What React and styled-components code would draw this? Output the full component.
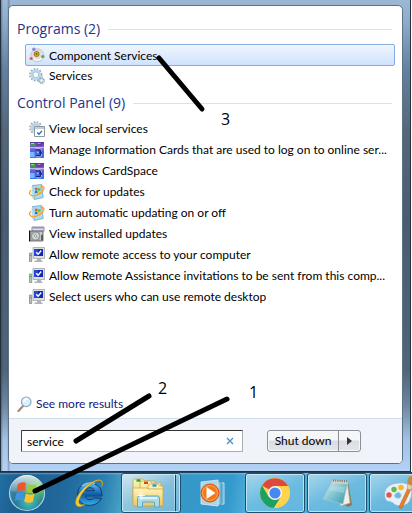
import React from "react";
import styled, { createGlobalStyle, css } from "styled-components";

const GlobalStyle = createGlobalStyle`
  * { box-sizing: border-box; }
  body { margin: 0; background: #fff; font-family: Lato, "Noto Sans", sans-serif; font-size: 12px; color: #000; }
  button, input { font: inherit; color: inherit; }
`;

const Desktop = styled.div`
  position: relative;
  display: flex;
  flex-direction: column;
  min-height: 100vh;
  overflow: hidden;
`;

const MenuFrame = styled.div`
  flex: 1;
  display: flex;
  margin-right: 1px;
  padding: 5px 7px 7px;
  border: solid #24303c;
  border-width: 0 1px 1px;
  background:
    linear-gradient(to right, rgba(20, 35, 50, 0.35), transparent 2px, transparent 6px, rgba(20, 35, 50, 0.3) 8px, transparent 9px),
    linear-gradient(#9cb8d5 0, #8facca 20px, #63819f 70px, #56677a 130px, #4a5d70 220px, #50647a 370px, #6e86a0 405px, #a3c2e4 440px, #b4d1f6 100%);
`;

const Menu = styled.main`
  flex: 1;
  min-width: 0;
  display: flex;
  flex-direction: column;
  border: 1px solid #5e7286;
  border-radius: 5px;
  background: #fff;
  overflow: hidden;
`;

const Results = styled.div`
  flex: 1;
  display: flex;
  flex-direction: column;
  padding: 10px 7px 5px 8px;
`;

const GroupTitle = styled.h2`
  display: flex;
  align-items: center;
  gap: 8px;
  height: 28px;
  margin: 0;
  padding: 0 3px 2px 0;
  font-family: "Open Sans", "Noto Sans", sans-serif;
  font-size: 14px;
  font-weight: 400;
  line-height: 20px;
  color: #24348a;
  white-space: nowrap;
  &::after { content: ""; flex: 1; height: 1px; background: #e1e1e1; }
`;

const List = styled.ul`
  margin: 0 0 4px;
  padding: 0 0 0 8px;
  list-style: none;
`;

const ResultLink = styled.a`
  display: flex;
  align-items: center;
  gap: 4px;
  height: 21px;
  padding: 0 3px;
  border: 1px solid transparent;
  border-radius: 2px;
  color: #000;
  line-height: 19px;
  text-decoration: none;
  white-space: nowrap;
  ${(p) => p.$selected && css`
    height: 22px;
    margin-bottom: -1px;
    border-color: #84acdd;
    background: linear-gradient(#f0f6fe, #cfe2fd);
  `}
`;

const MoreLink = styled.a`
  display: flex;
  align-items: center;
  gap: 3px;
  margin-top: auto;
  height: 19px;
  color: #10187e;
  text-decoration: none;
`;

const Footer = styled.form`
  display: flex;
  align-items: center;
  gap: 24px;
  height: 45px;
  padding: 0 41px 0 12px;
  border-top: 1px solid #d0ddea;
  background: #f0f3fa;
`;

const SearchBox = styled.div`
  flex: 1;
  min-width: 0;
  display: flex;
  align-items: center;
  height: 22px;
  border: 1px solid #a8adb3;
  border-top-color: #333;
  border-left-color: #444;
  border-radius: 1px;
  background: #fff;
`;

const SearchInput = styled.input`
  flex: 1;
  min-width: 0;
  height: 20px;
  padding: 0 5px;
  border: 0;
  outline: 0;
  background: transparent;
`;

const ClearButton = styled.button`
  display: flex;
  padding: 0 8px 0 4px;
  border: 0;
  background: none;
`;

const Split = styled.div`
  display: flex;
  height: 22px;
  border: 1px solid #8c9096;
  border-radius: 3px;
  background: linear-gradient(#f5f6f7 0 45%, #d9dce1 50%, #e3e6ea);
  box-shadow: inset 0 0 0 1px #f7f8fa;
`;

const SplitButton = styled.button`
  display: flex;
  align-items: center;
  justify-content: center;
  width: ${(p) => (p.$arrow ? 22 : 70)}px;
  padding: 0;
  border: 0;
  border-left: ${(p) => (p.$arrow ? "1px solid #8c9096" : "0")};
  background: none;
  line-height: 20px;
  white-space: nowrap;
`;

const Taskbar = styled.nav`
  display: flex;
  gap: 2px;
  height: 41px;
  border-top: 1px solid #27445b;
  background:
    linear-gradient(rgba(150, 215, 245, 0.5), transparent 2px),
    linear-gradient(100deg, #226fa3 0, #1c5e90 20px, #21689b 65px, #2b80b2 105px, #4da6c6 128px, #3798c8 170px, #3499cc 230px, #51b0dc 250px, #4eabd6 100%);
`;

const StartButton = styled.button`
  display: flex;
  align-items: center;
  justify-content: center;
  flex: none;
  width: 57px;
  padding: 0 3px 0 0;
  border: 0;
  background: none;
`;

const TaskButton = styled.button`
  display: flex;
  align-items: center;
  justify-content: center;
  flex: none;
  width: 60px;
  height: 40px;
  padding: 0;
  border: 1px solid transparent;
  border-radius: 3px;
  background: none;
  ${(p) => p.$open && css`
    border-color: #1e506e;
    background: linear-gradient(155deg, rgba(255, 255, 255, 0.5), rgba(255, 255, 255, 0.16) 50%, rgba(255, 255, 255, 0.1));
    box-shadow: inset 0 0 0 1px rgba(210, 240, 255, 0.75);
  `}
  ${(p) => p.$stacked && css`
    padding-right: 6px;
    background:
      linear-gradient(#d0edf9, #8bc5df) right 5px top / 1px 100% no-repeat,
      linear-gradient(#164660, #164660) right 4px top / 1px 100% no-repeat,
      linear-gradient(155deg, rgba(255, 255, 255, 0.75), rgba(255, 255, 255, 0.38) 50%, rgba(255, 255, 255, 0.3));
  `}
`;

const Notes = styled.svg`
  position: absolute;
  top: 0;
  left: 0;
  pointer-events: none;
  font-family: "Open Sans", "Noto Sans", sans-serif;
  font-size: 16px;
`;

const Glyph = styled.svg`
  flex: none;
  display: block;
`;

const Small = ({ children }) => (
  <Glyph width="16" height="16" viewBox="0 0 16 16" aria-hidden="true">{children}</Glyph>
);

const ComponentIcon = () => (
  <Small>
    <circle cx="8.3" cy="8.3" r="6.6" fill="#dcdce1" stroke="#c3c4ce" strokeWidth=".8" />
    <path d="M4 11a6 6 0 0 0 9 0" stroke="#f6f6f8" strokeWidth="1.6" fill="none" />
    <circle cx="7.6" cy="7" r="2.5" fill="#f0c02c" stroke="#94690f" strokeWidth=".9" />
    <path d="M6.2 7h2.8M7.6 5.6v2.8" stroke="#7a5208" strokeWidth=".8" />
    <circle cx="4.8" cy="2.2" r="1.7" fill="#8f88e0" />
    <circle cx="2.2" cy="11.5" r="1.6" fill="#e0604e" />
    <circle cx="13.8" cy="9.6" r="1.6" fill="#4fae48" />
  </Small>
);

const Cog = () => (
  <>
    <circle cx="6.8" cy="6.8" r="5.7" fill="none" stroke="#93b3c8" strokeWidth="2" strokeDasharray="1.7 1.3" />
    <circle cx="6.8" cy="6.8" r="4.1" fill="#fff" stroke="#bad6e8" strokeWidth="2.2" />
    <circle cx="6.8" cy="6.8" r="2.8" fill="none" stroke="#86a5b8" strokeWidth=".6" />
  </>
);

const ServicesIcon = () => (
  <Small>
    <Cog />
    <circle cx="12.5" cy="12.5" r="2.6" fill="#fff" stroke="#7694a8" strokeWidth="1.6" strokeDasharray="1.2 .8" />
    <circle cx="12.5" cy="12.5" r="1.6" fill="#fff" stroke="#a5c8dc" />
  </Small>
);

const LocalServicesIcon = () => (
  <Small>
    <Cog />
    <path d="M5.5 5.5h10v10h-10z" fill="#fff" stroke="#858e97" strokeWidth=".9" />
    <path d="M6 6h9v2H6z" fill="#c6ccd2" />
    <path d="M8.3 11.5l1.7 1.8 3-3.4" fill="none" stroke="#1877b5" strokeWidth="1.4" />
  </Small>
);

const CardSpaceIcon = () => (
  <Small>
    <defs>
      <linearGradient id="cardFill" x2="0" y2="1">
        <stop stopColor="#52379e" /><stop offset=".35" stopColor="#8466d6" /><stop offset=".6" stopColor="#4c63e4" /><stop offset="1" stopColor="#2f7cf4" />
      </linearGradient>
    </defs>
    <path d="M1 0h14v16H1z" fill="url(#cardFill)" />
    <path d="M1.5 1h5v3h-5z" fill="#35a83c" /><path d="M7.5 1h6v3h-6z" fill="#6f3a9c" />
    <path d="M2 1.5h3" stroke="#9de09c" /><path d="M8.5 1.5h3" stroke="#b58bdc" />
    <path d="M1 5h14v1.2H1z" fill="#c3b5f2" />
    <path d="M6.5 7.6h3.6c2.4 0 2.4 2.8 0 2.8 3 0 2.8 3.4-.4 3.4H7" fill="none" stroke="#1b2378" strokeWidth="1.8" />
    <path d="M6.5 6.7h4.3c1.5.3 2 1.5 1.5 2.8M8 10.3h2M7 14.8h3.5c1.6-.3 2.4-1.4 2-3" fill="none" stroke="#dbe6ff" strokeWidth=".8" />
    <path d="M1 10h4.5v5H1z" fill="#77b8ff" />
  </Small>
);

const UpdateIcon = () => (
  <Small>
    <path d="M3.5 1.5l9-1 1.7 13-8.7 2z" fill="#a9ddf0" stroke="#5d9fc4" strokeWidth=".7" />
    <path d="M3.2 2v11l2.2 2.5L4.5 2z" fill="#d7f1f9" stroke="#78b2cf" strokeWidth=".5" />
    <path d="M6 4q1.5-1 2.5 0v2.3q-1-.8-2.5 0z" fill="#e3562b" /><path d="M9 4q1.5.8 2.5 0v2.4q-1.2.8-2.5 0z" fill="#69b53e" />
    <path d="M6 7q1.5-.8 2.5 0v2.3q-1-.8-2.5 0z" fill="#2475cb" /><path d="M9 7q1.5.8 2.5 0v2.3q-1.2.8-2.5 0z" fill="#f5c52e" />
    <path d="M2 6.3C-.6 8.8.7 12 4.6 11.8c4-.3 8.8-3.2 10.2-6.6.5-1.4 0-2.4-1.2-2.5" fill="none" stroke="#f6a237" strokeWidth="1.3" />
    <path d="M10.8 2.6l3.4-1.4-.6 3.2z" fill="#f6a237" />
  </Small>
);

const InstalledIcon = () => (
  <Small>
    <path d="M3 1h12v4H3z" fill="#e6e4f0" stroke="#6f7187" strokeWidth=".8" />
    <path d="M4 2h10" stroke="#847bb1" />
    <path d="M1 5h13v10H1z" fill="#a4a8a6" stroke="#5c5f5f" strokeWidth=".8" /><path d="M.5 4.5v11" stroke="#111" />
    <circle cx="6.5" cy="10" r="4" fill="#d7ddd8" stroke="#7d8780" strokeWidth=".8" /><path d="M4 8l5 4M6.5 6.5v2" stroke="#a0b4a5" />
    <circle cx="6.5" cy="10" r="1.2" fill="#fff" stroke="#667" strokeWidth=".6" />
    <path d="M12 6v8" stroke="#e7eae8" /><path d="M12 9h2v5h-2z" fill="#59605c" />
  </Small>
);

const RemoteIcon = () => (
  <Small>
    <path d="M.5 6h2.2v8.5H.5z" fill="#bdc3bd" stroke="#777f78" strokeWidth=".7" /><path d="M1 8.5h1.3" stroke="#30b430" />
    <path d="M4 .5h11.5v11H4z" fill="#dedede" stroke="#a2a4a9" strokeWidth=".8" />
    <path d="M5 2h9v7H5z" fill="#1229b5" /><path d="M5 2h4v7H5z" fill="#2447d8" />
    <path d="M7.2 5.2l2 2 3-3.7" fill="none" stroke="#fff" strokeWidth="1.4" />
    <path d="M8 11.5h4v2H8zM5.5 13.5h8v1.5h-8z" fill="#b0b2b5" />
  </Small>
);

const Magnifier = () => (
  <Small>
    <path d="M6 10L1.5 15" stroke="#a58b7b" strokeWidth="2.2" strokeLinecap="round" />
    <circle cx="9.2" cy="5.8" r="4.8" fill="#d9effc" stroke="#8cabc5" strokeWidth="1.2" />
    <path d="M6.8 5.3q1-2.7 4-2" stroke="#fff" strokeWidth="1.6" fill="none" />
  </Small>
);

const StartOrb = () => (
  <Glyph width="38" height="38" viewBox="0 0 38 38" aria-hidden="true">
    <defs>
      <radialGradient id="orb" cx=".55" cy=".75" r=".75">
        <stop stopColor="#45c7bb" /><stop offset=".5" stopColor="#24789c" /><stop offset="1" stopColor="#5d8caa" />
      </radialGradient>
      <radialGradient id="leaf" cx=".8" cy=".35" r=".5"><stop stopColor="#7bea50" /><stop offset="1" stopColor="#4ba36c" stopOpacity="0" /></radialGradient>
      <linearGradient id="shine" x2="0" y2="1"><stop stopColor="#fff" stopOpacity=".75" /><stop offset="1" stopColor="#fff" stopOpacity=".12" /></linearGradient>
    </defs>
    <circle cx="19" cy="19" r="17.5" fill="url(#orb)" stroke="#a8d1df" strokeWidth="1.2" />
    <circle cx="19" cy="19" r="17" fill="url(#leaf)" />
    <path d="M3 17a16 16 0 0 1 32 0q-15 4-32 0z" fill="url(#shine)" />
    <path d="M10 10q4-3 8-1l-1.4 8q-4-1.8-8.2.6z" fill="#ee562b" />
    <path d="M19.5 10q5 2.5 9 0l-1.6 8q-4.2 2-8.8 0z" fill="#98cb3d" />
    <path d="M8.2 19q4-2 8.1-.2l-1.6 8q-4-1.7-8 .5z" fill="#3f93dc" />
    <path d="M17.8 19.5q4.6 2.2 8.8.2l-1.7 8q-4.2 2.2-8.7-.3z" fill="#fbc22d" />
  </Glyph>
);

const ExplorerE = () => (
  <Glyph width="32" height="32" viewBox="0 0 32 32" aria-hidden="true">
    <defs><linearGradient id="ie" x2="0" y2="1"><stop stopColor="#5fc0f2" /><stop offset=".5" stopColor="#0f5ca6" /><stop offset="1" stopColor="#35b2ef" /></linearGradient></defs>
    <path d="M29 19H12.2c.6 4.2 6.6 4.8 8.6 1.8l7.6.5C24 31.5 4.5 31 4.5 17.3 4.5 2.5 29.5 2 29 19zM12.4 13.8h9c-.8-4.2-7.9-4.2-9 0z" fill="url(#ie)" stroke="#0c3c76" strokeWidth="1" />
    <path d="M9 9q6-5 13-2" fill="none" stroke="#bce8fc" strokeWidth="1.3" opacity=".8" />
    <path d="M28.5 10C32 3 27 .6 19.5 4.8 8 11 .5 23 3.3 28c1.5 2.5 5 2 9-.7C6 29 4.3 26.5 7 20.5 10.5 13 17 7 23 4.3c5-2.2 7-.4 5.5 5.7z" fill="#f9cd35" stroke="#c98a0d" strokeWidth=".5" />
  </Glyph>
);

const FoldersIcon = () => (
  <Glyph width="32" height="30" viewBox="0 0 32 30" aria-hidden="true">
    <defs><linearGradient id="folder" x2="0" y2="1"><stop stopColor="#fff4b8" /><stop offset="1" stopColor="#e8c766" /></linearGradient></defs>
    <g fill="url(#folder)" stroke="#c9a74d" strokeWidth=".8">
      <path d="M1 3q0-2 2-2h8l2 2h10v20H1z" /><path d="M8 5q0-2 2-2h8l2 2h9v21H8z" /><path d="M16 8q0-2 2-2h8l2 2h3v20H16z" /><path d="M1 10h14l1 1h15v17H1z" />
    </g>
    <path d="M4.5 2.5h4" stroke="#1faa1f" strokeWidth="2.4" /><path d="M12 4.8h4" stroke="#e04427" strokeWidth="2.4" /><path d="M20.5 7.5h4" stroke="#2595e8" strokeWidth="2.4" />
    <path d="M5.5 29V20q0-2 2-2h18q2 0 2 2v9h-5v-5h-12v5z" fill="#a9daf0" fillOpacity=".9" stroke="#5ba7cb" />
    <path d="M8 20h17" stroke="#effaff" strokeWidth="1.5" /><path d="M9 13v9M5 17.5h8M6 14.5l6 6M12 14.5l-6 6" stroke="#fff" strokeWidth=".8" />
  </Glyph>
);

const MediaIcon = () => (
  <Glyph width="32" height="30" viewBox="0 0 32 30" aria-hidden="true">
    <path d="M15 4l12 1v21l-12 1z" fill="#6eb2d5" stroke="#b5ddef" /><path d="M14 3l10 1v23l-10 1z" fill="#8cc6e0" stroke="#3b88b1" strokeWidth=".7" />
    <path d="M4 4l17-2v26L4 26z" fill="#afd3e7" stroke="#d9edf6" strokeWidth=".8" />
    <circle cx="13" cy="15" r="9" fill="#f17919" stroke="#dc520f" /><circle cx="13" cy="15" r="7.5" fill="none" stroke="#ffa54f" />
    <path d="M9.5 9l9 6-9 6z" fill="#fff" />
  </Glyph>
);

const ChromeIcon = () => (
  <Glyph width="32" height="32" viewBox="0 0 32 32" aria-hidden="true">
    <circle cx="16" cy="16" r="15" fill="#ffd34c" />
    <path d="M16 16L3 8.5A15 15 0 0 1 29.1 9H16z" fill="#dd4a3c" />
    <path d="M3 8.5L9.8 20 16 16l6 4-7 11A15 15 0 0 1 3 8.5z" fill="#1da160" />
    <path d="M16 9h13.1A15 15 0 0 1 15 31l7-11.5z" fill="#ffd34c" />
    <circle cx="16" cy="16" r="7.1" fill="#f5f5f5" /><circle cx="16" cy="16" r="5.6" fill="#4688f1" />
  </Glyph>
);

const NotepadIcon = () => (
  <Glyph width="32" height="32" viewBox="0 0 32 32" aria-hidden="true">
    <defs><linearGradient id="pad" x2="1" y2="1"><stop stopColor="#e4f5f5" /><stop offset=".5" stopColor="#83c6d1" /><stop offset="1" stopColor="#3895a8" /></linearGradient></defs>
    <path d="M27 5l4 23-4 2-5-3z" fill="#8a795d" /><path d="M26 4l3 22-10 3z" fill="#f0efe8" stroke="#b6b4a6" strokeWidth=".6" />
    <path d="M12 3l15 1-5 23L2 22z" fill="url(#pad)" stroke="#a6cbd2" strokeWidth=".6" />
    <path d="M12 3l15 1-.7 3L10 6z" fill="#d5d2c9" /><path d="M12 3.4l15 1" stroke="#6b6e6d" strokeWidth="2" strokeDasharray="1 1.2" />
    <path d="M8 13l15 3 1-6-13-1z" fill="#d9f0f2" opacity=".3" />
  </Glyph>
);

const PaintIcon = () => (
  <Glyph width="32" height="34" viewBox="0 0 32 34" aria-hidden="true">
    <path d="M14 7C4 8 0 15 2 22c1.5 5 6 3 8 5 3 4 12 4 16-1 4-6 4-16-1-18q-5-2-11-1zm0 10c4-2 6 5 1 5-4 0-4-4-1-5z" fill="#e4f1fa" stroke="#8fbcda" />
    <circle cx="6" cy="19" r="2.7" fill="#e25645" /><circle cx="11" cy="13.5" r="2.7" fill="#68b845" /><circle cx="18" cy="11.5" r="2.8" fill="#f7b824" />
    <path d="M25 12l3 1-9 19q-3 1-3-1z" fill="#e8812e" stroke="#b95b16" strokeWidth=".6" />
    <path d="M25 7l5 2-2 5-4-1z" fill="#e5d1ad" stroke="#a88858" strokeWidth=".5" /><path d="M25 8Q23 2 28 0l4 2q0 5-3 8z" fill="#c28a4c" />
  </Glyph>
);

const groups = [
  {
    title: "Programs (2)",
    items: [
      ["Component Services", ComponentIcon, true],
      ["Services", ServicesIcon],
    ],
  },
  {
    title: "Control Panel (9)",
    items: [
      ["View local services", LocalServicesIcon],
      ["Manage Information Cards that are used to log on to online ser...", CardSpaceIcon],
      ["Windows CardSpace", CardSpaceIcon],
      ["Check for updates", UpdateIcon],
      ["Turn automatic updating on or off", UpdateIcon],
      ["View installed updates", InstalledIcon],
      ["Allow remote access to your computer", RemoteIcon],
      ["Allow Remote Assistance invitations to be sent from this comp...", RemoteIcon],
      ["Select users who can use remote desktop", RemoteIcon],
    ],
  },
];

const tasks = [
  ["Internet Explorer", ExplorerE],
  ["Windows Explorer", FoldersIcon, true, true],
  ["Windows Media Player", MediaIcon],
  ["Google Chrome", ChromeIcon, true],
  ["Notepad", NotepadIcon, true],
  ["Paint", PaintIcon, true],
];

export default function App() {
  return (
    <Desktop>
      <GlobalStyle />
      <MenuFrame>
        <Menu>
          <Results>
            {groups.map((group) => (
              <section key={group.title}>
                <GroupTitle>{group.title}</GroupTitle>
                <List>
                  {group.items.map(([label, Icon, selected]) => (
                    <li key={label}>
                      <ResultLink href="#" $selected={selected}>
                        <Icon />
                        {label}
                      </ResultLink>
                    </li>
                  ))}
                </List>
              </section>
            ))}
            <MoreLink href="#"><Magnifier />See more results</MoreLink>
          </Results>
          <Footer onSubmit={(e) => e.preventDefault()}>
            <SearchBox>
              <SearchInput aria-label="Search programs and files" defaultValue="service" />
              <ClearButton type="button" aria-label="Clear search">
                <Glyph width="8" height="8" viewBox="0 0 8 8"><path d="M1 1l6 6M7 1L1 7" stroke="#4c8fc0" strokeWidth="1.3" /></Glyph>
              </ClearButton>
            </SearchBox>
            <Split>
              <SplitButton type="button">Shut down</SplitButton>
              <SplitButton type="button" $arrow aria-label="Shut down options">
                <Glyph width="5" height="8" viewBox="0 0 5 8"><path d="M0 0l5 4-5 4z" fill="#333" /></Glyph>
              </SplitButton>
            </Split>
          </Footer>
        </Menu>
      </MenuFrame>
      <Taskbar>
        <StartButton aria-label="Start"><StartOrb /></StartButton>
        {tasks.map(([label, Icon, open, stacked]) => (
          <TaskButton key={label} aria-label={label} $open={open} $stacked={stacked}><Icon /></TaskButton>
        ))}
      </Taskbar>
      <Notes width="412" height="513" viewBox="0 0 412 513">
        <g stroke="#000" strokeWidth="5" strokeLinecap="round">
          <path d="M159 58L202 109" />
          <path d="M76 441L149 396" />
          <path d="M35 491L227 399" />
        </g>
        <text x="221" y="125">3</text>
        <text x="158" y="394">2</text>
        <text x="249" y="398">1</text>
      </Notes>
    </Desktop>
  );
}
